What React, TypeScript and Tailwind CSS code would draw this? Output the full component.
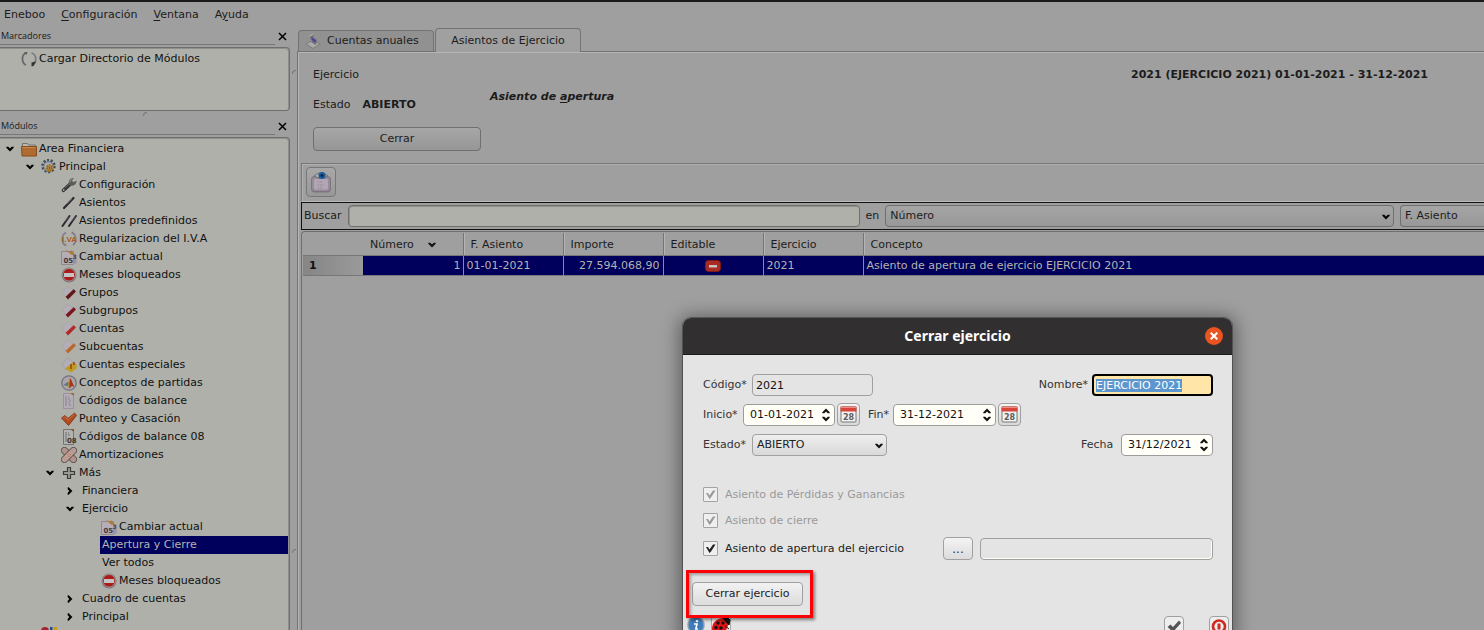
import { useEffect, useRef } from 'react';
import type { ReactNode } from 'react';
import clsx from 'clsx';

type IconName =
  | 'folder' | 'gears' | 'wrench' | 'pen' | 'pens' | 'iva' | 'calendar' | 'blocked'
  | 'grupos' | 'subgrupos' | 'cuentas' | 'subcuentas' | 'especiales' | 'conceptos'
  | 'doc' | 'check' | 'doc08' | 'bandage' | 'plus' | 'reload' | 'people';

interface TreeNode {
  label: string;
  level: number;
  icon?: IconName;
  open?: boolean;
  selected?: boolean;
}

const MENU = [
  { before: 'Eneboo', key: '', after: '' },
  { before: '', key: 'C', after: 'onfiguración' },
  { before: '', key: 'V', after: 'entana' },
  { before: 'A', key: 'y', after: 'uda' },
];

const TREE: TreeNode[] = [
  { label: 'Area Financiera', level: 0, icon: 'folder', open: true },
  { label: 'Principal', level: 1, icon: 'gears', open: true },
  { label: 'Configuración', level: 2, icon: 'wrench' },
  { label: 'Asientos', level: 2, icon: 'pen' },
  { label: 'Asientos predefinidos', level: 2, icon: 'pens' },
  { label: 'Regularizacion del I.V.A', level: 2, icon: 'iva' },
  { label: 'Cambiar actual', level: 2, icon: 'calendar' },
  { label: 'Meses bloqueados', level: 2, icon: 'blocked' },
  { label: 'Grupos', level: 2, icon: 'grupos' },
  { label: 'Subgrupos', level: 2, icon: 'subgrupos' },
  { label: 'Cuentas', level: 2, icon: 'cuentas' },
  { label: 'Subcuentas', level: 2, icon: 'subcuentas' },
  { label: 'Cuentas especiales', level: 2, icon: 'especiales' },
  { label: 'Conceptos de partidas', level: 2, icon: 'conceptos' },
  { label: 'Códigos de balance', level: 2, icon: 'doc' },
  { label: 'Punteo y Casación', level: 2, icon: 'check' },
  { label: 'Códigos de balance 08', level: 2, icon: 'doc08' },
  { label: 'Amortizaciones', level: 2, icon: 'bandage' },
  { label: 'Más', level: 2, icon: 'plus', open: true },
  { label: 'Financiera', level: 3, open: false },
  { label: 'Ejercicio', level: 3, open: true },
  { label: 'Cambiar actual', level: 4, icon: 'calendar' },
  { label: 'Apertura y Cierre', level: 4, selected: true },
  { label: 'Ver todos', level: 4 },
  { label: 'Meses bloqueados', level: 4, icon: 'blocked' },
  { label: 'Cuadro de cuentas', level: 3, open: false },
  { label: 'Principal', level: 3, open: false },
  { label: '', level: 1, icon: 'people' },
];

const INDENT = ['pl-0', 'pl-5', 'pl-10', 'pl-15', 'pl-20'];

function Chevron({ dir = 'down', className }: { dir?: 'down' | 'right' | 'up'; className?: string }) {
  const d = {
    down: 'M.3 1.700h2L4 3.400l1.700-1.700h2v1L4 6.400.3 2.700z',
    up: 'M.3 6.300h2L4 4.600l1.700 1.700h2v-1L4 1.600.3 5.300z',
    right: 'M1.700.300v2L3.400 4 1.700 5.700v2h1L6.400 4 2.700.300z',
  }[dir];
  return (
    <svg className={clsx('h-2 w-2 shrink-0', className)} viewBox="0 0 8 8" fill="currentColor" aria-hidden="true">
      <path d={d} />
    </svg>
  );
}

// Pale sheet with a coloured band, used by the account level icons
function Eraser({ color }: { color: string }) {
  return (
    <>
      <path d="M.8 7L6.500 1l5.500 3.500L5 13z" fill="#b3adb5" stroke="#9c959f" strokeWidth=".6" strokeDasharray="1.500 1" />
      <path d="M4.500 11.500L12.500 4l2.500 2.500L7 14.500z" fill={color} />
      <path d="M4.500 11.500L12.500 4" stroke="#cfc4ca" strokeOpacity=".5" />
    </>
  );
}

function Sheet() {
  return (
    <>
      <path d="M2.500.500h8l2 2v13h-10z" fill="#b3acb4" stroke="#9a919c" />
      <path d="M4 4h4M4 6h6M4 8h3M8 8h3M4 10h6M4 12h3M8 12h2" stroke="#88808c" strokeDasharray="2 1" />
      <path d="M9 0h4v3z" fill="#a06a28" />
    </>
  );
}

const ICONS: Record<IconName, ReactNode> = {
  folder: (
    <>
      <path d="M1.500 7V2.500h5l1 1.500h7V7" fill="#b8b8b4" stroke="#74746f" />
      <path d="M.5 5.500h15v9.500H1z" fill="#ae6c32" stroke="#8a4a18" />
      <path d="M1.500 6.500h13" stroke="#c58b55" />
    </>
  ),
  gears: (
    <>
      <circle cx="7.500" cy="7" r="5.800" fill="none" stroke="#3f4c5a" strokeWidth="2.800" strokeDasharray="2 1.600" />
      <circle cx="7.500" cy="7.500" r="4.800" fill="#a9b0b8" stroke="#65717e" />
      <circle cx="8.500" cy="9" r="3" fill="none" stroke="#a8741f" strokeWidth="2" strokeDasharray="1.800 .8" />
      <circle cx="8.500" cy="9" r="2.200" fill="#c0a060" stroke="#a3650c" />
      <circle cx="8.500" cy="9" r=".9" fill="#5a4630" />
    </>
  ),
  wrench: (
    <>
      <path d="M2.500 13.300l7-6.500" stroke="#333" strokeWidth="3.600" strokeLinecap="round" />
      <path d="M4 11l5-4.500" stroke="#777" strokeWidth=".9" strokeLinecap="round" />
      <path d="M8 7.500C7 3 9.500.600 13 1l-2 2.600 1.400 1.600 3.100-1.700C15.800 7 12.500 9.700 9 8.500z" fill="#5c5c5c" />
      <path d="M9 5c0-2 1.500-3 2.500-3" stroke="#9a9a98" fill="none" />
      <circle cx="2.700" cy="13" r=".9" fill="#aaaaa4" />
    </>
  ),
  pen: (
    <>
      <path d="M3 13l9.500-10" stroke="#2d2830" strokeWidth="2.200" strokeLinecap="round" />
      <path d="M6 9l5-5" stroke="#6d5a76" strokeWidth=".8" />
    </>
  ),
  pens: (
    <>
      <path d="M1.500 13l7-10M8 13l7-10" stroke="#2d2830" strokeWidth="2" strokeLinecap="round" />
      <path d="M4 8.500l4-5M10.500 8.500l4-5" stroke="#6d5a76" strokeWidth=".7" />
    </>
  ),
  iva: (
    <>
      <path d="M5 1.500C0 4 .3 12 4 14M11 1.500c5 2.500 4.700 10 1 12.500" fill="none" stroke="#857a8c" strokeWidth="1.600" />
      <path d="M3 12l3 2-2 1.500zM13 4l-3-2 2-1.500z" fill="#857a8c" />
      <text x="1" y="11" fontSize="8" fontWeight="700" fontFamily="Liberation Sans, sans-serif" fill="#b05a1c">I.VA</text>
    </>
  ),
  calendar: (
    <>
      <path d="M.5 2.500h12v13H.5z" fill="#b5aeb7" stroke="#8f8792" />
      <path d="M12 6h3.500v8.500H12z" fill="#9c8ea2" />
      <path d="M4 0l5 3 1-2 4 5-4-.5z" fill="#b3762e" />
      <text x="2.500" y="14" fontSize="7" fontWeight="700" fontFamily="DejaVu Sans, sans-serif" fill="#3d3840">05</text>
      <text x="11.500" y="10" fontSize="6" fontWeight="700" fontFamily="DejaVu Sans, sans-serif" fill="#4d4550">3</text>
    </>
  ),
  blocked: (
    <>
      <circle cx="8" cy="8" r="7.500" fill="#77777a" />
      <circle cx="8" cy="7.700" r="6.300" fill="#a91c1c" stroke="#b9b9b9" strokeWidth=".6" />
      <path d="M3 6h10v4H3z" fill="#c4c2c4" />
    </>
  ),
  grupos: <Eraser color="#5f1717" />,
  subgrupos: <Eraser color="#7c1420" />,
  cuentas: <Eraser color="#b02a2a" />,
  subcuentas: <Eraser color="#b8682c" />,
  especiales: (
    <>
      <path d="M.8 7L6.500 1l5.500 3.500L5 13z" fill="#b3adb5" stroke="#9c959f" strokeWidth=".6" />
      <path d="M4 11.500l7-5 2-2v2.500h2.500v5l-2 .5-3 3z" fill="#c09a1e" />
      <path d="M10 7v5M13 5v3" stroke="#99401a" strokeWidth="1.500" />
    </>
  ),
  conceptos: (
    <>
      <circle cx="8" cy="8" r="7.200" fill="#a9a5ad" stroke="#77717d" strokeWidth="1.300" />
      <path d="M2.500 10l4-2L9 3l1 5-3 5-1.500-2.500z" fill="#c29a24" />
      <path d="M9 3c2 2 2.500 6 4.500 9l-2.500-1-3 2.500z" fill="#a8351a" />
      <path d="M2.500 10l4-3L8 9l-2 2z" fill="#5c7593" />
    </>
  ),
  doc: <Sheet />,
  check: (
    <>
      <path d="M.5 7l3.500-2.500 3 3L13.500 2l2 2.500L7.500 14.500z" fill="#b04c20" stroke="#7c2d0e" strokeWidth=".8" />
      <path d="M2 7l2-1 3 3 6.500-6" fill="none" stroke="#c9764a" strokeWidth=".8" />
    </>
  ),
  doc08: (
    <>
      <path d="M2.500.500h8l2 2v13h-10z" fill="#b2b2b0" stroke="#747474" />
      <path d="M4 4h4M4 6h6M4 8h3M4 10h2M4 12h2" stroke="#6a6a6a" strokeDasharray="2 1" />
      <path d="M9 0h4v3z" fill="#8a5a2a" />
      <text x="6" y="14" fontSize="7" fontWeight="700" fontFamily="DejaVu Sans, sans-serif" fill="#3c382c">08</text>
    </>
  ),
  bandage: (
    <>
      <path d="M3.500 3.500l9 9" stroke="#4a3e3c" strokeWidth="7" strokeLinecap="round" />
      <path d="M3.500 3.500l9 9" stroke="#b0938a" strokeWidth="5.600" strokeLinecap="round" />
      <path d="M12.500 3.500l-9 9" stroke="#4a3e3c" strokeWidth="7" strokeLinecap="round" />
      <path d="M12.500 3.500l-9 9" stroke="#b89c93" strokeWidth="5.600" strokeLinecap="round" />
      <path d="M8 5l3 3-3 3-3-3z" fill="#c4a99f" />
      <path d="M8 6.500v.8M6.600 8h.8M9 8h.8M8 9.300v.8" stroke="#a83a2c" />
    </>
  ),
  plus: <path d="M6.500 2.500h3v4h4v3h-4v4h-3v-4h-4v-3h4z" fill="#999996" stroke="#3b3b3b" strokeWidth="1.200" />,
  reload: (
    <>
      <path d="M5 2C0 4 .5 12 5 14" fill="none" stroke="#68686c" strokeWidth="1.800" />
      <path d="M3 1.500l3.500-.5L5.500 4z" fill="#555" />
      <path d="M10.500 2c5 1.500 5.500 8.500 2 11" fill="none" stroke="#7c7c80" strokeWidth="1.800" />
      <path d="M10.500 11.500l4.500-1-2.500 4.500-2 .5z" fill="#333" />
    </>
  ),
  people: (
    <>
      <circle cx="4" cy="4" r="4" fill="#a3222f" />
      <path d="M9 0h2.500v8H9z" fill="#1f4f8a" />
      <path d="M12.500 0H16v8h-3.500z" fill="#c09d22" />
    </>
  ),
};

function TreeIcon({ name }: { name: IconName }) {
  return (
    <svg className="h-4 w-4 shrink-0" viewBox="0 0 16 16" aria-hidden="true">
      {ICONS[name]}
    </svg>
  );
}

function DockTitle({ title }: { title: string }) {
  return (
    <div className="flex h-[18px] items-stretch">
      <h2 className="flex-1 border-b border-[#777] pl-px font-['Open_Sans','Noto_Sans',sans-serif] text-[9px] leading-[18px] text-[#1a1a1a]">
        {title}
      </h2>
      <button type="button" aria-label={`Cerrar ${title}`} className="flex w-[15px] items-center justify-center text-black">
        <svg className="h-[9px] w-[9px]" viewBox="0 0 9 9" aria-hidden="true">
          <path d="M1 1l7 7M8 1L1 8" stroke="currentColor" strokeWidth="1.500" />
        </svg>
      </button>
    </div>
  );
}

function Grip() {
  return <span className="block h-1 w-1 rounded-tl border-l border-t border-[#777]" />;
}

function TreeRow({ node }: { node: TreeNode }) {
  return (
    <li className={clsx('flex h-[18px] items-center', INDENT[node.level])}>
      <span className="flex w-5 shrink-0 pl-1.5 text-black">
        {node.open !== undefined && <Chevron dir={node.open ? 'down' : 'right'} />}
      </span>
      <span
        className={clsx(
          'flex h-full items-center gap-0.5 whitespace-nowrap',
          node.icon ? 'pl-px' : 'pl-0.5',
          node.selected && 'flex-1 bg-[#00005c] text-[#b4b4ad]',
        )}
      >
        {node.icon && <TreeIcon name={node.icon} />}
        {node.label}
      </span>
    </li>
  );
}

function Sidebar() {
  return (
    <aside className="flex w-[290px] shrink-0 flex-col">
      <DockTitle title="Marcadores" />
      <div className="mt-0.5 h-16 rounded-r-sm border border-l-0 border-[#6f6f6e] bg-[#afb0a9] pt-0.5 text-[#111] shadow-[inset_-1px_1px_0_#8f8f8c]">
        <div className="flex h-[18px] items-center gap-0.5 pl-[21px]">
          <TreeIcon name="reload" />
          Cargar Directorio de Módulos
        </div>
      </div>
      <div className="flex h-1.5 items-center justify-center">
        <Grip />
      </div>
      <DockTitle title="Módulos" />
      <ul className="mt-0.5 min-h-0 flex-1 overflow-hidden rounded-tr-sm border-r border-t border-[#6f6f6e] bg-[#afb0a9] pr-px pt-0.5 text-[#111] shadow-[inset_-1px_1px_0_#8f8f8c]">
        {TREE.map((node, i) => (
          <TreeRow key={i} node={node} />
        ))}
      </ul>
    </aside>
  );
}

function TabBar() {
  return (
    <div className="flex items-end gap-px pl-px pt-px" role="tablist">
      <button
        type="button"
        role="tab"
        aria-selected="false"
        className="flex h-[21px] w-[136px] items-center gap-1.5 rounded-t-sm border border-b-0 border-[#737373] bg-[#919191] pl-1.5"
      >
        <svg className="h-4 w-4" viewBox="0 0 16 16" aria-hidden="true">
          <path d="M1 11l7-4 7 4-7 4.500z" fill="#a9a9a9" stroke="#7c7c7c" />
          <path d="M4 4l5-3-1 3 4 3-1 5-5-3 2-2z" fill="#6f6f6f" />
          <path d="M4 3.500L8.500 1" stroke="#bbb" />
          <path d="M6.500 5.500l4 3" stroke="#4a3fb0" strokeWidth="1.800" />
        </svg>
        Cuentas anuales
      </button>
      <button
        type="button"
        role="tab"
        aria-selected="true"
        className="z-10 -mb-px h-6 w-[146px] rounded-t-sm border border-b-0 border-[#737373] bg-[#a0a0a0]"
      >
        Asientos de Ejercicio
      </button>
    </div>
  );
}

function SearchBar() {
  return (
    <div className="flex h-7 items-center overflow-hidden border border-r-0 border-[#111] pl-0.5">
      <label htmlFor="buscar">Buscar</label>
      <input id="buscar" className="ml-1.5 h-[22px] w-[512px] shrink-0 rounded-sm border border-[#6f6f6e] bg-[#afb0a9] px-1 shadow-[inset_1px_1px_0_#8f8f8c] outline-none" />
      <label htmlFor="campo" className="px-1.5">en</label>
      <div className="relative flex-1">
        <select id="campo" className="block h-[22px] w-full appearance-none rounded-sm border border-[#6f6f6f] bg-linear-to-b from-[#a5a5a5] to-[#989898] px-1" defaultValue="Número">
          <option>Número</option>
        </select>
        <Chevron className="pointer-events-none absolute right-1 top-2 text-black" />
      </div>
      <select aria-label="Segundo campo" className="ml-1.5 h-[22px] w-[84px] appearance-none rounded-l-sm border border-r-0 border-[#6f6f6f] bg-linear-to-b from-[#a5a5a5] to-[#989898] px-1" defaultValue="F. Asiento">
        <option>F. Asiento</option>
      </select>
    </div>
  );
}

function EntriesTable() {
  const th = 'border-l border-[#757575] px-[7px] pt-0.5 text-left font-normal shadow-[inset_1px_0_0_#b4b4b4]';
  const td = 'border-l border-[#8b8b8b] px-[3px] pt-px';
  return (
    <div className="mt-px min-h-0 flex-1 rounded-tl-sm border-l border-t border-[#6f6f6f] pl-px pt-px">
      <table className="w-full table-fixed border-collapse">
        <colgroup>
          <col className="w-[60px]" />
          <col className="w-[100px]" />
          <col className="w-[100px]" />
          <col className="w-[100px]" />
          <col className="w-[100px]" />
          <col className="w-[100px]" />
          <col />
        </colgroup>
        <thead>
          <tr className="h-[22px]">
            <td />
            <th scope="col" className="px-[7px] pt-0.5 text-left font-normal">
              <span className="flex items-center gap-3.5">
                Número
                <Chevron className="text-[#111]" />
              </span>
            </th>
            <th scope="col" className={th}>F. Asiento</th>
            <th scope="col" className={th}>Importe</th>
            <th scope="col" className={th}>Editable</th>
            <th scope="col" className={th}>Ejercicio</th>
            <th scope="col" className={th}>Concepto</th>
          </tr>
        </thead>
        <tbody>
          <tr className="h-5 border-y border-[#777] bg-[#00005c] text-[#b4b4ad]">
            <th scope="row" className="bg-linear-to-r from-[#858585] to-[#9a9a9a] pl-1.5 pt-px text-left font-bold text-[#111]">1</th>
            <td className="px-0.5 pt-px text-right">1</td>
            <td className={td}>01-01-2021</td>
            <td className={clsx(td, 'text-right')}>27.594.068,90</td>
            <td className={td}>
              <svg className="mx-auto h-3 w-4" viewBox="0 0 16 12" role="img" aria-label="No editable">
                <rect x=".5" y=".5" width="15" height="11" rx="3" fill="#a82c24" stroke="#7c1a18" />
                <path d="M4 5h8v2.500H4z" fill="#c8c4c0" />
              </svg>
            </td>
            <td className={td}>2021</td>
            <td className={td}>Asiento de apertura de ejercicio EJERCICIO 2021</td>
          </tr>
        </tbody>
      </table>
    </div>
  );
}

function MainPane() {
  return (
    <main className="flex min-w-0 flex-1 flex-col">
      <TabBar />
      <div className="flex min-h-0 flex-1 flex-col border-l border-t border-[#737373] pl-[3px] shadow-[inset_1px_1px_0_#b5b5b5]">
        <div className="flex h-[111px] items-start px-3 pt-[13px]">
          <div className="w-[177px] shrink-0">
            <div className="leading-5">Ejercicio</div>
            <div className="mt-2.5 flex gap-3 leading-5">
              <span>Estado</span>
              <strong>ABIERTO</strong>
            </div>
            <button
              type="button"
              className="mt-3 h-6 w-[168px] rounded-sm border border-[#6f6f6f] bg-linear-to-b from-[#a7a7a7] to-[#969696]"
            >
              Cerrar
            </button>
          </div>
          <div className="pt-6 font-bold italic leading-4">
            Asiento de <u className="underline-offset-2">a</u>pertura
          </div>
          <div className="ml-auto mr-11 font-bold leading-5">2021 (EJERCICIO 2021) 01-01-2021 - 31-12-2021</div>
        </div>
        <div className="flex h-[39px] items-start border-l border-t border-b border-[#777] border-b-[#bbb] pl-1 pt-[3px] shadow-[inset_1px_1px_0_#b0b0b0]">
          <button
            type="button"
            aria-label="Ver asiento"
            className="flex h-[30px] w-[30px] items-center justify-center rounded-sm border border-[#777] bg-linear-to-b from-[#a8a8a8] to-[#989898]"
          >
            <svg className="h-[22px] w-[22px]" viewBox="0 0 22 22" aria-hidden="true">
              <rect x="1" y="5" width="20" height="16.500" rx="4" fill="#7c7482" />
              <rect x="2" y="6" width="18" height="14" rx="3" fill="#958b99" />
              <rect x="4" y="8" width="14" height="10.500" rx="1" fill="#b3a6b4" />
              <path d="M7.500 11h5M7.500 14h6M7.500 17h5" stroke="#94899a" strokeDasharray="2 .6" />
              <path d="M4 5Q11-1.500 18 5 11 9.500 4 5z" fill="#b2adb2" stroke="#666" strokeWidth=".9" />
              <circle cx="12" cy="4.500" r="3.600" fill="#1c5f9f" />
              <circle cx="12" cy="4.500" r="1.500" fill="#0c2440" />
            </svg>
          </button>
        </div>
        <SearchBar />
        <EntriesTable />
      </div>
    </main>
  );
}

interface DateFieldProps {
  id: string;
  label: string;
  value: string;
  labelWidth: string;
  fieldWidth: string;
}

function DateField({ id, label, value, labelWidth, fieldWidth }: DateFieldProps) {
  return (
    <div className="flex items-center">
      <label htmlFor={id} className={clsx('whitespace-nowrap', labelWidth)}>{label}</label>
      <div className={clsx('flex h-[22px] items-center rounded-sm border border-[#9c9c9c] bg-[#fffff8] pl-1.5 pr-1 text-[#111]', fieldWidth)}>
        <input id={id} className="min-w-0 flex-1 bg-transparent outline-none" defaultValue={value} />
        <div className="flex flex-col">
          <button type="button" aria-label={`Aumentar ${label}`}><Chevron dir="up" /></button>
          <button type="button" aria-label={`Disminuir ${label}`}><Chevron dir="down" /></button>
        </div>
      </div>
    </div>
  );
}

function CalendarButton({ label }: { label: string }) {
  return (
    <button
      type="button"
      aria-label={label}
      className="ml-0.5 flex h-[23px] w-[23px] items-center justify-center rounded-sm border border-[#a0a0a0] bg-linear-to-b from-[#f4f4f4] to-[#d8d8d8]"
    >
      <svg className="h-[17px] w-[17px]" viewBox="0 0 17 17" aria-hidden="true">
        <rect x="1" y="1" width="15" height="15" rx="1" fill="#f2f2f0" stroke="#777" />
        <path d="M.5.500h16v5H.5z" fill="#d9453a" />
        <path d="M1 1.500h15" stroke="#ee8f86" />
        <text x="8.500" y="14" textAnchor="middle" fontSize="8" fontWeight="700" fontFamily="DejaVu Sans, sans-serif" fill="#5c5c5c">28</text>
      </svg>
    </button>
  );
}

function CheckRow({ id, label, disabled }: { id: string; label: string; disabled?: boolean }) {
  return (
    <div className={clsx('flex items-center gap-[7px]', disabled ? 'text-[#9a9a9a]' : 'text-[#222]')}>
      <div className="relative h-[15px] w-[15px]">
        <input
          id={id}
          type="checkbox"
          defaultChecked
          disabled={disabled}
          className="block h-[15px] w-[15px] appearance-none rounded-[1px] border border-[#a3a3a3] bg-[#efefef]"
        />
        <svg className="pointer-events-none absolute inset-0 h-[15px] w-[15px]" viewBox="0 0 15 15" aria-hidden="true">
          <path d="M3 6h2l1.500 2.500L10 3.500h2.500L8 10.500 6.500 12z" fill="currentColor" />
        </svg>
      </div>
      <label htmlFor={id}>{label}</label>
    </div>
  );
}

function CloseYearDialog() {
  const nameRef = useRef<HTMLInputElement>(null);

  // The name field opens focused with its text selected
  useEffect(() => {
    nameRef.current?.focus();
    nameRef.current?.select();
  }, []);

  return (
    <section
      role="dialog"
      aria-labelledby="dialog-title"
      className="absolute left-[683px] top-[316px] z-20 w-[549px] rounded-t-lg bg-[#e4e4e4] text-[#333] shadow-[0_2px_18px_4px_rgba(0,0,0,0.4),0_0_0_1px_rgba(0,0,0,0.3)]"
    >
      <header className="relative flex h-[37px] items-center justify-center rounded-t-lg border-b border-[#1c1b1b] bg-[#322f30]">
        <h1 id="dialog-title" className="font-['Noto_Sans','Open_Sans',sans-serif] text-sm font-bold text-white">
          Cerrar ejercicio
        </h1>
        <button type="button" aria-label="Cerrar ventana" className="absolute right-[9px] top-[9px] flex h-[18px] w-[18px] items-center justify-center rounded-full bg-[#e95420]">
          <svg className="h-2 w-2" viewBox="0 0 8 8" aria-hidden="true">
            <path d="M.7.700l6.600 6.600M7.300.700L.7 7.300" stroke="#fff" strokeWidth="2" />
          </svg>
        </button>
      </header>

      <div className="flex flex-col pl-5 pr-[19px] pt-[19px]">
        <div className="flex items-center justify-between">
          <div className="flex items-center">
            <label htmlFor="codigo" className="w-[49px] whitespace-nowrap">Código*</label>
            <input id="codigo" readOnly defaultValue="2021" className="h-[22px] w-[121px] rounded-sm border border-[#a0a0a0] bg-[#e4e4e4] px-[3px] text-[#111] outline-none" />
          </div>
          <div className="flex items-center gap-1">
            <label htmlFor="nombre">Nombre*</label>
            <input
              id="nombre"
              ref={nameRef}
              defaultValue="EJERCICIO 2021"
              className="h-[22px] w-[121px] rounded-sm border-2 border-black bg-[#ffe6a8] px-0.5 leading-4 outline-none selection:bg-[#5c96cf] selection:text-white"
            />
          </div>
        </div>

        <div className="mt-[7px] flex items-center">
          <DateField id="inicio" label="Inicio*" value="01-01-2021" labelWidth="w-10" fieldWidth="w-[92px]" />
          <CalendarButton label="Elegir inicio" />
          <div className="ml-2">
            <DateField id="fin" label="Fin*" value="31-12-2021" labelWidth="w-[25px]" fieldWidth="w-[103px]" />
          </div>
          <CalendarButton label="Elegir fin" />
        </div>

        <div className="mt-2 flex items-center justify-between">
          <div className="flex items-center">
            <label htmlFor="estado" className="w-[49px] whitespace-nowrap">Estado*</label>
            <div className="relative">
              <select id="estado" defaultValue="ABIERTO" className="block h-[22px] w-[135px] appearance-none rounded-sm border border-[#a0a0a0] bg-linear-to-b from-[#eee] to-[#d9d9d9] px-1 text-[#222]">
                <option>ABIERTO</option>
              </select>
              <Chevron className="pointer-events-none absolute right-1 top-2 text-[#111]" />
            </div>
          </div>
          <DateField id="fecha" label="Fecha" value="31/12/2021" labelWidth="w-10" fieldWidth="w-[92px]" />
        </div>

        <div className="mt-[31px] flex flex-col gap-[11px]">
          <CheckRow id="perdidas" label="Asiento de Pérdidas y Ganancias" disabled />
          <CheckRow id="cierre" label="Asiento de cierre" disabled />
        </div>
        <div className="mt-[9px] flex items-center">
          <CheckRow id="apertura" label="Asiento de apertura del ejercicio" />
          <button type="button" aria-label="Buscar asiento" className="ml-auto h-[23px] w-[30px] rounded-sm border border-[#a0a0a0] bg-linear-to-b from-[#f4f4f4] to-[#dcdcdc] text-xs">
            ...
          </button>
          <input aria-label="Asiento de apertura" readOnly className="ml-[7px] h-[22px] w-[233px] rounded-sm border border-[#a0a0a0] bg-[#e4e4e4] shadow-[inset_-1px_-1px_0_#fffff4] outline-none" />
        </div>
      </div>

      <div className="px-[9px] pt-[22px]">
        <div className="relative w-[111px]">
          <button type="button" className="block h-6 w-full rounded-sm border border-[#a0a0a0] bg-linear-to-b from-[#f2f2f2] to-[#dcdcdc] text-[#222]">
            Cerrar ejercicio
          </button>
          <span className="pointer-events-none absolute -left-1.5 -right-2.5 -top-3 -bottom-3 border-3 border-[#fb0007] shadow-[2px_2px_3px_rgba(0,0,0,0.45),inset_2px_2px_3px_rgba(0,0,0,0.3)]" />
        </div>
      </div>

      <footer className="mt-2.5 flex h-6 items-start pl-1 pr-[3px]">
        <button type="button" aria-label="Información">
          <svg className="h-[18px] w-[18px]" viewBox="0 0 18 18" aria-hidden="true">
            <circle cx="9" cy="9" r="8" fill="#3f7dba" stroke="#8a9eb2" strokeWidth="1.400" />
            <circle cx="10" cy="5" r="1.300" fill="#fff" />
            <path d="M7 8h3l-1.200 5H11" fill="none" stroke="#fff" strokeWidth="1.600" />
          </svg>
        </button>
        <button type="button" aria-label="Depurar" className="ml-1.5">
          <svg className="h-5 w-5" viewBox="0 0 20 20" aria-hidden="true">
            <path d="M.5.500h19v19H.5z" fill="#eee" stroke="#aaa" />
            <path d="M1 13C1 6 6 2 13 2l5 5-4 10H2z" fill="#e01414" />
            <path d="M12 2l4-1 3 3-1 5-3-3zM14 10l4 3M13 14l3 4" fill="#111" stroke="#111" />
            <circle cx="7" cy="7" r="1.700" fill="#111" />
            <circle cx="12" cy="7" r="1.600" fill="#111" />
            <circle cx="5" cy="11.500" r="1.700" fill="#111" />
            <circle cx="10" cy="12" r="1.700" fill="#111" />
          </svg>
        </button>
        <button type="button" aria-label="Aceptar" className="ml-auto flex h-5 w-5 items-center justify-center rounded-sm border border-[#a0a0a0] bg-[#eee]">
          <svg className="h-4 w-4" viewBox="0 0 16 16" aria-hidden="true">
            <path d="M1.500 9l3-2.500L7 9l6-6.500 2 2.500-8 9z" fill="#555" />
          </svg>
        </button>
        <button type="button" aria-label="Cancelar" className="ml-[25px] flex h-5 w-5 items-center justify-center rounded-sm border border-[#a0a0a0] bg-[#eee]">
          <svg className="h-4 w-4" viewBox="0 0 16 16" aria-hidden="true">
            <circle cx="8" cy="8.500" r="6" fill="none" stroke="#cf2a22" strokeWidth="2.600" />
            <path d="M8 5.500v6" stroke="#cf2a22" strokeWidth="3" />
          </svg>
        </button>
      </footer>
    </section>
  );
}

export default function App() {
  return (
    <div className="relative flex h-screen flex-col overflow-hidden border-t-2 border-[#1b1a1a] bg-[#9f9f9f] font-['DejaVu_Sans',sans-serif] text-[11px] leading-[14px] text-[#1c1c1c]">
      <nav className="flex h-[25px] shrink-0 items-center gap-4 pl-1">
        {MENU.map((item) => (
          <button type="button" key={item.before + item.key}>
            {item.before}
            <u className="underline-offset-2">{item.key}</u>
            {item.after}
          </button>
        ))}
      </nav>
      <div className="flex min-h-0 flex-1">
        <Sidebar />
        <div className="flex w-[7px] shrink-0 flex-col justify-between pb-[77px] pl-0.5 pt-[43px]">
          <Grip />
          <Grip />
        </div>
        <MainPane />
      </div>
      <CloseYearDialog />
    </div>
  );
}
